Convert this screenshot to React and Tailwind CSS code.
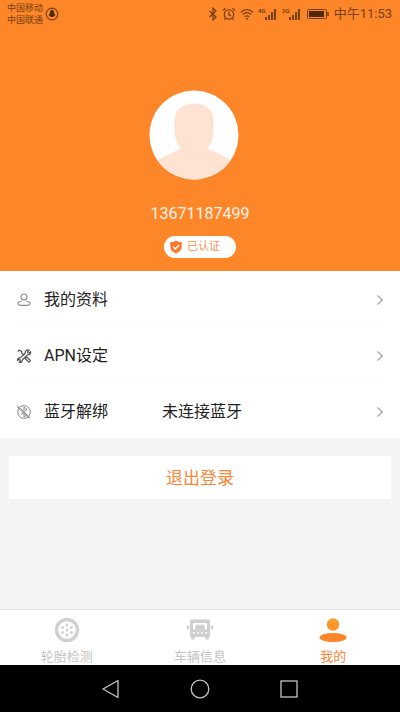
import React from 'react';

const ProfileIcon = () => (
  <svg viewBox="0 0 16 16" className="w-4 h-4" fill="none" stroke="#8a8a8a" strokeWidth="1.1">
    <circle cx="8" cy="5" r="3" />
    <path d="M5.5 9.2C3.2 9.5 1.8 10.4 1.8 11.4c0 1.300 2.800 2 6.200 2s6.200-.7 6.200-2c0-1-1.400-1.900-3.700-2.200" />
  </svg>
);

const ToolsIcon = () => (
  <svg viewBox="0 0 16 16" className="w-4 h-4" fill="none" stroke="#505050" strokeWidth="1.2" strokeLinecap="round" strokeLinejoin="round">
    <path d="M2 3.2 3.4 2l2.2 1.600.2 1.600 2 2" />
    <path d="M9.600 9.400l1-.4 3.600 3.200c.6.9-.8 2.200-1.700 1.700L9.200 10.500z" />
    <path d="M13.200 2.200 11.400 4l.8 1 1 .2L14.600 3.600c.5 2-1 3.600-3.200 3.200L6.200 12c.3 1.800-1.200 2.800-3 2.400L4.400 13l-.4-1.200-1.300-.3L1.500 12.600c-.3-1.800 1-3 2.800-2.700L9.300 5c-.4-2 1.400-3.600 3.900-2.800z" />
  </svg>
);

const UnbindIcon = () => (
  <svg viewBox="0 0 16 16" className="w-4 h-4" fill="none" stroke="#858585" strokeWidth="1" strokeLinecap="round" strokeLinejoin="round">
    <path d="M4 2.800A6.500 6.500 0 0 1 13 12M12 13.200A6.500 6.500 0 0 1 3 4" />
    <path d="M1.800 2.200 14.200 13.800M1.500 3.200 12.800 14" />
    <path d="M8 7V3l3 2.500-2 1.700M8 9.500V13l2.200-1.800M7 9l-2 1.500" />
  </svg>
);

const ChevronIcon = () => (
  <svg viewBox="0 0 8 12" className="w-2 h-3" fill="none" stroke="#a3a3a3" strokeWidth="1.2">
    <path d="M1.500 1.500 6.300 6 1.500 10.500" />
  </svg>
);

const WheelIcon = () => (
  <svg viewBox="0 0 28 28" className="w-7 h-7" fill="none" stroke="#d0d0d0">
    <circle cx="14" cy="14" r="10.500" strokeWidth="3.400" />
    <circle cx="14" cy="14" r="1.500" fill="#d0d0d0" stroke="none" />
    <g strokeWidth="2.600" strokeLinecap="round">
      <path d="M14 8.500v.8M14 18.700v.8M9.300 11.300l.6.300M18.100 16.400l.6.300M9.300 16.700l.6-.3M18.100 11.600l.6-.3" />
    </g>
  </svg>
);

const TruckIcon = () => (
  <svg viewBox="0 0 28 28" className="w-7 h-7" fill="#d0d0d0">
    <path
      fillRule="evenodd"
      d="M5 3.500h18a1 1 0 0 1 1 1V21H4V4.500a1 1 0 0 1 1-1zM7 7v6.500h14V7zM7 16v1.500h2V16zM11 16.500v1.200h2v-1.200zM15 16.500v1.200h2v-1.200zM19 16v1.500h2V16z"
    />
    <path d="M10 8.800h8l1.300 4.700H8.700zM.8 9.500H3v4H.8zM25 9.500h2.200v4H25zM2.500 10.500H5v1H2.500zM23 10.500h2.500v1H23zM5.200 21h3.300v2.500H5.200zM19.500 21h3.300v2.500h-3.300z" />
  </svg>
);

const MineIcon = () => (
  <svg viewBox="0 0 28 28" className="w-7 h-7">
    <defs>
      <linearGradient id="mine" x1="0" y1="0" x2="0" y2="1">
        <stop offset="0" stopColor="#fba12c" />
        <stop offset="1" stopColor="#fd8f27" />
      </linearGradient>
    </defs>
    <circle cx="14" cy="8.500" r="6.200" fill="url(#mine)" />
    <ellipse cx="14" cy="21.500" rx="13.500" ry="4.600" fill="#fd8427" />
  </svg>
);

const SignalIcon = ({ label }) => (
  <svg viewBox="0 0 20 14" className="w-5 h-3.5" fill="#75400f">
    <text x="0" y="6" fontSize="6" fontWeight="700" fontFamily="Roboto, sans-serif">{label}</text>
    <path d="M7 10h2v3H7zM10 8h2v5h-2zM13 5h2v8h-2zM16 2h2v11h-2z" />
  </svg>
);

const StatusBar = () => (
  <div className="flex items-center justify-between h-7 pl-[7px] pr-2 text-[#75400f]">
    <div className="flex items-center gap-[2px]">
      <div className="text-[9px] leading-3">
        <p>中国移动</p>
        <p>中国联通</p>
      </div>
      <svg viewBox="0 0 14 14" className="w-3.5 h-3.5">
        <circle cx="7" cy="7" r="5.800" fill="none" stroke="#75400f" strokeWidth="1.200" />
        <path d="M7 3c-1.500 0-2 1-2 2.500L3.800 8.500 5 9.300c.3 1 3.700 1 4 0l1.200-.8L9 5.500C9 4 8.500 3 7 3z" fill="#4f2a0a" />
      </svg>
    </div>
    <div className="flex items-center gap-1">
      <svg viewBox="0 0 10 14" className="w-2.5 h-3.5" fill="none" stroke="#75400f" strokeWidth="1.300">
        <path d="M1.500 4 8 10 5 12.800V1.200L8 4 1.500 10" />
      </svg>
      <svg viewBox="0 0 14 14" className="w-3.5 h-3.5" fill="none" stroke="#75400f" strokeWidth="1.300">
        <circle cx="7" cy="7.500" r="4.700" />
        <path d="M7 4.800v3l2 1M1 3.500 3.500 1.300M13 3.500l-2.500-2.200M3.500 11.500l-1.200 1.200M10.500 11.500l1.200 1.200" />
      </svg>
      <svg viewBox="0 0 14 14" className="w-3.5 h-3.5" fill="none" stroke="#75400f" strokeWidth="1.300">
        <path d="M.8 5.200c3.600-3.400 8.800-3.400 12.400 0M2.800 7.600c2.500-2.300 5.900-2.300 8.400 0M4.800 9.800c1.400-1.100 3-1.100 4.400 0" />
        <circle cx="7" cy="11.800" r="1" fill="#75400f" stroke="none" />
      </svg>
      <SignalIcon label="4G" />
      <SignalIcon label="2G" />
      <svg viewBox="0 0 24 14" className="w-6 h-3.5">
        <rect x="1.500" y="2.500" width="19" height="9" rx="1" fill="none" stroke="#75400f" />
        <rect x="3" y="4" width="15" height="6" fill="#4f2a0a" />
        <path d="M22 5v4" stroke="#75400f" strokeWidth="1.500" />
      </svg>
      <span className="text-[13px] leading-4">中午11:53</span>
    </div>
  </div>
);

const Avatar = () => (
  <svg viewBox="0 0 90 90" className="w-[90px] h-[90px]" role="img" aria-label="头像">
    <defs>
      <clipPath id="avatar">
        <circle cx="45" cy="45" r="44.500" />
      </clipPath>
    </defs>
    <g clipPath="url(#avatar)">
      <rect width="90" height="90" fill="#fff" />
      <path d="M32 58.500C26 61.500 18 64.500 10 69.500V90h70V69.500c-8-5-15-8-21-11z" fill="#fee3d3" />
      <path d="M45 14c12 0 19 6 19 17 0 7 0 12-1 17-2 9-10 16.500-18 16.500S29 57 27 48c-1-5-1-10-1-17 0-11 7-17 19-17z" fill="#fee3d3" stroke="#fbdac8" strokeWidth=".7" />
    </g>
  </svg>
);

const menuItems = [
  { label: '我的资料', icon: ProfileIcon },
  { label: 'APN设定', icon: ToolsIcon },
  { label: '蓝牙解绑', icon: UnbindIcon, value: '未连接蓝牙' },
];

const tabs = [
  { label: '轮胎检测', icon: WheelIcon },
  { label: '车辆信息', icon: TruckIcon },
  { label: '我的', icon: MineIcon, active: true },
];

const App = () => {
  return (
    <div className="min-h-screen flex flex-col bg-[#f4f4f4] font-['Roboto','Noto_Sans_CJK_SC',sans-serif]">
      <header className="bg-[#fd8629] pb-[13px]">
        <StatusBar />
        <div className="flex flex-col items-center pt-[62px]">
          <div className="pr-3">
            <Avatar />
          </div>
          <p className="mt-6 text-base leading-5 text-[#fff3e8]">13671187499</p>
          <div className="mt-3 flex items-center gap-1 h-[22px] pl-[5px] pr-4 rounded-full bg-white text-[11px] text-[#fb9450]">
            <svg viewBox="0 0 14 14" className="w-3.5 h-3.5">
              <path d="M7 .5c1.800 1.300 3.600 1.600 5.700 1.600v5c0 3-2.600 5.200-5.700 6.400C3.900 12.300 1.300 10.100 1.300 7.100v-5C3.400 2.100 5.200 1.800 7 .5z" fill="#f77b2e" />
              <path d="M4.300 7 6.300 9l3.600-4" fill="none" stroke="#fff" strokeWidth="1.300" />
            </svg>
            <span>已认证</span>
          </div>
        </div>
      </header>

      <main className="flex-1">
        <ul className="bg-white px-4 divide-y divide-[#f7f7f7]">
          {menuItems.map(({ label, icon: Icon, value }) => (
            <li key={label}>
              <button type="button" className="w-full h-[55px] pt-[2px] flex items-center text-left text-base text-[#222]">
                <Icon />
                <span className="ml-3 w-[118px]">{label}</span>
                <span className="flex-1">{value}</span>
                <ChevronIcon />
              </button>
            </li>
          ))}
        </ul>

        <div className="px-[9px] pt-[18px]">
          <button type="button" className="w-full h-[43px] pt-[2px] bg-white text-[17px] text-[#fb8637]">
            退出登录
          </button>
        </div>
      </main>

      <nav className="grid grid-cols-3 h-14 bg-white border-t border-[#e6e6e6]">
        {tabs.map(({ label, icon: Icon, active }) => (
          <a
            key={label}
            href="#"
            aria-current={active ? 'page' : undefined}
            className={`flex flex-col items-center pt-[6px] text-[13px] leading-4 ${active ? 'text-[#fb8637]' : 'text-[#c4c4c4]'}`}
          >
            <Icon />
            <span className="mt-[5px]">{label}</span>
          </a>
        ))}
      </nav>

      <div className="flex items-center justify-center gap-[69px] h-[47px] bg-black">
        <button type="button" aria-label="返回">
          <svg viewBox="0 0 20 20" className="block w-5 h-5" fill="none" stroke="#c4c4c4" strokeWidth="1.300" strokeLinejoin="round">
            <path d="M17 1.500v17L2 10z" />
          </svg>
        </button>
        <button type="button" aria-label="主页">
          <svg viewBox="0 0 20 20" className="block w-5 h-5" fill="none" stroke="#c4c4c4" strokeWidth="1.300">
            <circle cx="10" cy="10" r="8.800" />
          </svg>
        </button>
        <button type="button" aria-label="最近任务">
          <svg viewBox="0 0 20 20" className="block w-5 h-5" fill="none" stroke="#c4c4c4" strokeWidth="1.300">
            <rect x="2" y="2" width="16" height="16" />
          </svg>
        </button>
      </div>
    </div>
  );
};

export default App;
